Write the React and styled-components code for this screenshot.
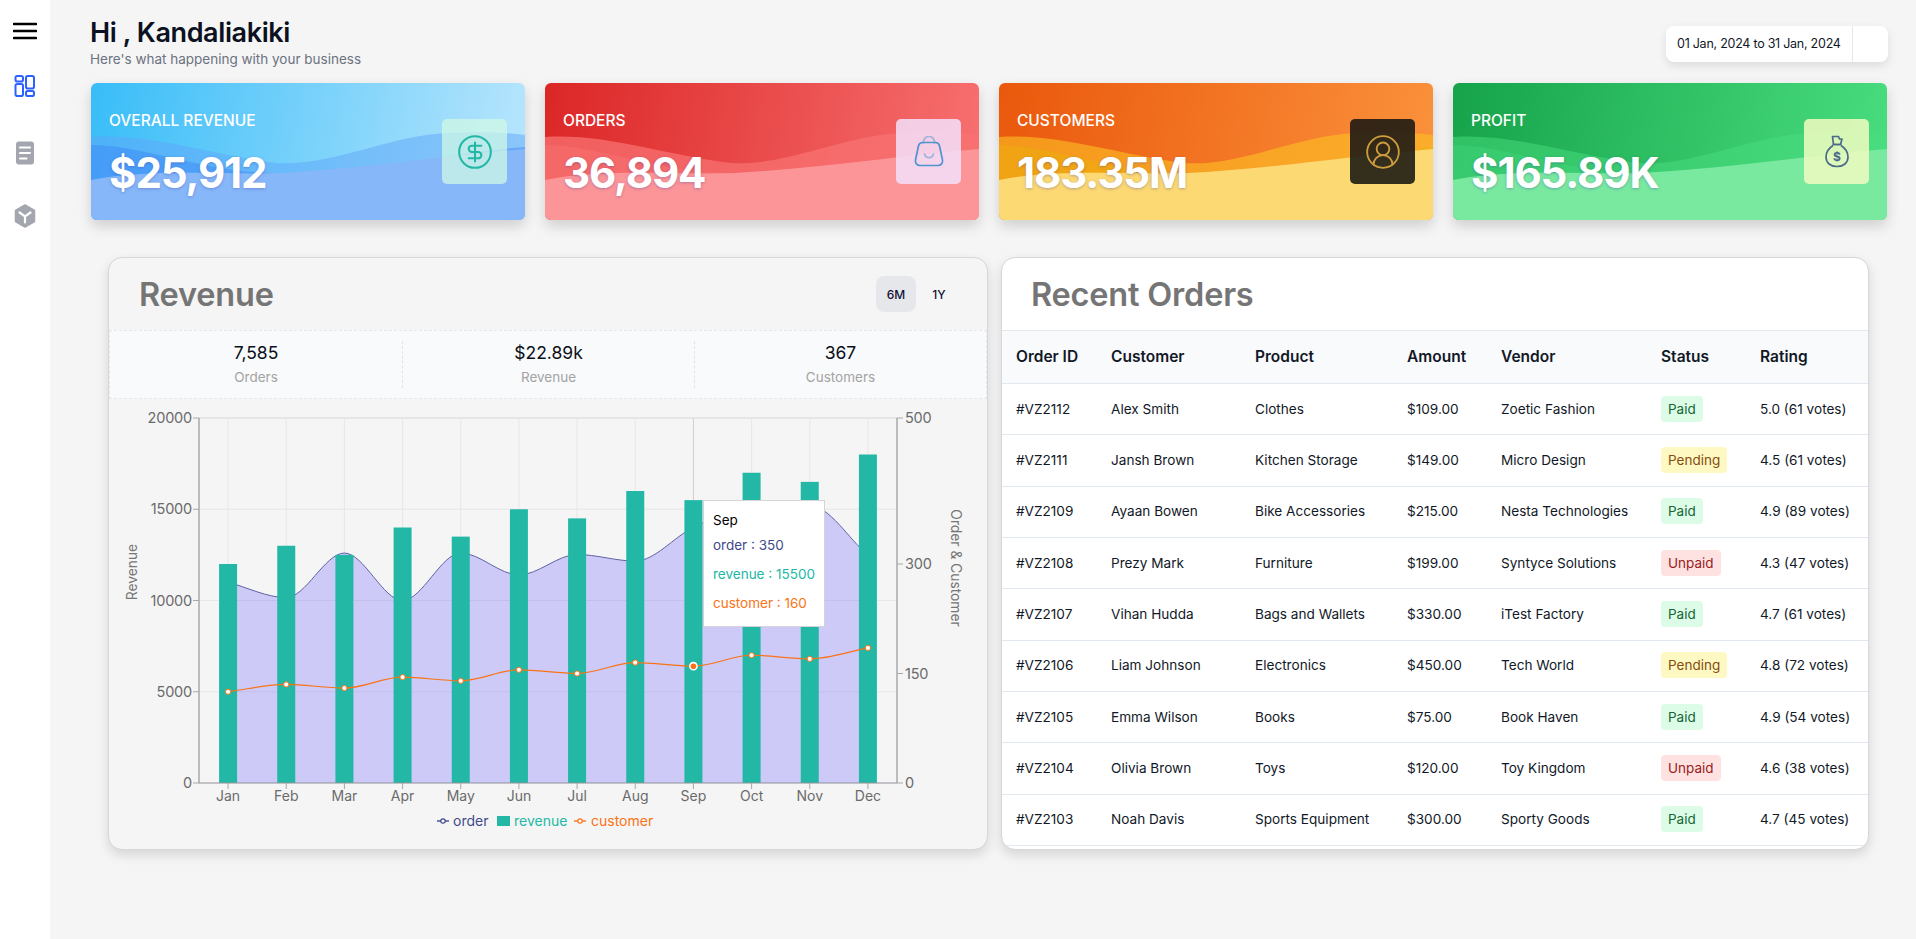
import React from 'react';
import styled, { createGlobalStyle } from 'styled-components';
import { CircleDollarSign, CircleUserRound } from 'lucide-react';

const GlobalStyle = createGlobalStyle`
  * { box-sizing: border-box; }
  body {
    margin: 0;
    background: #f5f5f5;
    font-family: Inter, "Noto Sans", sans-serif;
    color: #0f172a;
  }
`;

const STAT_CARDS = [
  {
    label: 'OVERALL REVENUE', value: '$25,912', from: '#38bdf8', to: '#bae6fd',
    back: 'rgba(96,165,250,.5)', band: 'rgba(59,130,246,.45)', front: '#86b7f9',
    box: 'rgba(209,250,229,.72)', tint: '#22b8a5', icon: 'dollar',
  },
  {
    label: 'ORDERS', value: '36,894', from: '#dc2626', to: '#f87171',
    back: 'rgba(248,113,113,.75)', band: 'rgba(248,113,113,.5)', front: '#fc9598',
    box: 'rgba(243,225,250,.85)', tint: '#4f93cf', icon: 'bag',
  },
  {
    label: 'CUSTOMERS', value: '183.35M', from: '#ea580c', to: '#fb923c',
    back: 'rgba(251,191,36,.62)', band: 'rgba(234,179,8,.4)', front: '#fcd972',
    box: 'rgba(30,27,20,.9)', tint: '#cf9c3e', icon: 'user',
  },
  {
    label: 'PROFIT', value: '$165.89K', from: '#16a34a', to: '#4ade80',
    back: 'rgba(74,222,128,.5)', band: 'rgba(74,222,128,.3)', front: '#79e9a0',
    box: 'rgba(236,250,190,.88)', tint: '#4b6a8a', icon: 'sack',
  },
];

const ORDERS = [
  ['#VZ2112', 'Alex Smith', 'Clothes', '$109.00', 'Zoetic Fashion', 'Paid', '5.0 (61 votes)'],
  ['#VZ2111', 'Jansh Brown', 'Kitchen Storage', '$149.00', 'Micro Design', 'Pending', '4.5 (61 votes)'],
  ['#VZ2109', 'Ayaan Bowen', 'Bike Accessories', '$215.00', 'Nesta Technologies', 'Paid', '4.9 (89 votes)'],
  ['#VZ2108', 'Prezy Mark', 'Furniture', '$199.00', 'Syntyce Solutions', 'Unpaid', '4.3 (47 votes)'],
  ['#VZ2107', 'Vihan Hudda', 'Bags and Wallets', '$330.00', 'iTest Factory', 'Paid', '4.7 (61 votes)'],
  ['#VZ2106', 'Liam Johnson', 'Electronics', '$450.00', 'Tech World', 'Pending', '4.8 (72 votes)'],
  ['#VZ2105', 'Emma Wilson', 'Books', '$75.00', 'Book Haven', 'Paid', '4.9 (54 votes)'],
  ['#VZ2104', 'Olivia Brown', 'Toys', '$120.00', 'Toy Kingdom', 'Unpaid', '4.6 (38 votes)'],
  ['#VZ2103', 'Noah Davis', 'Sports Equipment', '$300.00', 'Sporty Goods', 'Paid', '4.7 (45 votes)'],
];

const COLUMNS = [
  ['Order ID', 95], ['Customer', 144], ['Product', 152], ['Amount', 94],
  ['Vendor', 160], ['Status', 99], ['Rating', 124],
];

const MONTHS = ['Jan', 'Feb', 'Mar', 'Apr', 'May', 'Jun', 'Jul', 'Aug', 'Sep', 'Oct', 'Nov', 'Dec'];
const REVENUE = [12000, 13000, 12500, 14000, 13500, 15000, 14500, 16000, 15500, 17000, 16500, 18000];
const ORDER = [275, 254, 315, 250, 315, 285, 313, 304, 350, 380, 380, 312];
const CUSTOMER = [125, 135, 130, 145, 140, 155, 150, 165, 160, 175, 170, 185];

const PLOT = { left: 90, right: 788, top: 19, bottom: 384 };
const BAND = (PLOT.right - PLOT.left) / 12;
const HEIGHT = PLOT.bottom - PLOT.top;
const xAt = (i) => PLOT.left + BAND * (i + 0.5);
const yLeft = (v) => PLOT.bottom - (v / 20000) * HEIGHT;
const yRight = (v) => PLOT.bottom - (v / 500) * HEIGHT;

// monotone cubic through the points, same look as the chart lib's smooth curve
const smoothPath = (pts) => {
  const n = pts.length;
  const slopes = [];
  for (let i = 0; i < n - 1; i++) {
    slopes.push((pts[i + 1][1] - pts[i][1]) / (pts[i + 1][0] - pts[i][0]));
  }
  const tangents = pts.map((_, i) => {
    if (i === 0) return slopes[0];
    if (i === n - 1) return slopes[n - 2];
    if (slopes[i - 1] * slopes[i] <= 0) return 0;
    return (slopes[i - 1] + slopes[i]) / 2;
  });
  let d = `M${pts[0][0]},${pts[0][1]}`;
  for (let i = 0; i < n - 1; i++) {
    const h = (pts[i + 1][0] - pts[i][0]) / 3;
    d += ` C${pts[i][0] + h},${pts[i][1] + tangents[i] * h} ${pts[i + 1][0] - h},${pts[i + 1][1] - tangents[i + 1] * h} ${pts[i + 1][0]},${pts[i + 1][1]}`;
  }
  return d;
};

const orderLine = smoothPath(ORDER.map((v, i) => [xAt(i), yRight(v)]));
const customerLine = smoothPath(CUSTOMER.map((v, i) => [xAt(i), yRight(v)]));
const orderArea = `${orderLine} L${xAt(11)},${PLOT.bottom} L${xAt(0)},${PLOT.bottom} Z`;

const Shell = styled.div`
  display: flex;
  min-height: 100vh;
  background: #f5f5f5;
`;

const Sidebar = styled.aside`
  width: 50px;
  flex: none;
  background: #fff;
  display: flex;
  flex-direction: column;
  align-items: center;
  padding-top: 22px;
`;

const NavIcon = styled.div`
  display: flex;
  margin-bottom: ${(p) => p.$gap}px;
  color: ${(p) => p.$color};
`;

const Main = styled.main`
  flex: 1;
  min-width: 0;
  padding: 16px 29px 0 41px;
`;

const TopBar = styled.header`
  display: flex;
  justify-content: space-between;
  align-items: flex-start;
  margin-bottom: 15px;
  margin-left: -1px;
`;

const Greeting = styled.h1`
  margin: 0;
  font-size: 27px;
  line-height: 34px;
  font-weight: 600;
  letter-spacing: -0.4px;
  color: #0b1120;
`;

const SubGreeting = styled.p`
  margin: 0;
  font-size: 13.5px;
  line-height: 18px;
  color: #6b7280;
`;

const DateRange = styled.div`
  margin: 10px -1px 0 0;
  width: 222px;
  height: 36px;
  display: flex;
  background: #fff;
  border-radius: 8px;
  box-shadow: 0 4px 10px rgba(0, 0, 0, 0.1);
`;

const DateText = styled.span`
  width: 187px;
  padding-left: 11px;
  border-right: 1px solid #e5e7eb;
  font-size: 12.5px;
  letter-spacing: -0.25px;
  line-height: 36px;
  white-space: nowrap;
  color: #111827;
`;

const StatGrid = styled.section`
  display: grid;
  grid-template-columns: repeat(4, 1fr);
  gap: 20px;
`;

const StatCard = styled.article`
  position: relative;
  height: 137px;
  overflow: hidden;
  border-radius: 6px;
  padding: 27px 18px;
  color: #fff;
  background: linear-gradient(100deg, ${(p) => p.$from}, ${(p) => p.$to});
`;

const StatShadow = styled.div`
  border-radius: 6px;
  box-shadow: 0 6px 14px rgba(0, 0, 0, 0.16);
`;

const Waves = styled.svg`
  position: absolute;
  inset: 0;
  width: 100%;
  height: 100%;
`;

const StatLabel = styled.div`
  position: relative;
  font-size: 15.5px;
  line-height: 22px;
  font-weight: 500;
`;

const StatValue = styled.div`
  position: relative;
  margin-top: 15px;
  font-size: 42px;
  line-height: 52px;
  font-weight: 700;
  letter-spacing: -1.1px;
  text-shadow: 0 1px 3px rgba(60, 60, 160, 0.35);
`;

const StatIconBox = styled.div`
  position: absolute;
  top: 36px;
  right: 18px;
  width: 65px;
  height: 65px;
  border-radius: 5px;
  display: flex;
  align-items: center;
  justify-content: center;
  background: ${(p) => p.$bg};
  color: ${(p) => p.$tint};
`;

const PanelGrid = styled.section`
  display: grid;
  grid-template-columns: 880fr 868fr;
  gap: 13px;
  margin: 37px 18px 0 17px;
`;

const Panel = styled.div`
  height: 593px;
  overflow: hidden;
  border: 1px solid #d6d6db;
  border-radius: 14px;
  background: ${(p) => p.$bg};
  box-shadow: 0 5px 12px rgba(0, 0, 0, 0.13);
`;

const PanelHead = styled.div`
  height: 72px;
  display: flex;
  align-items: center;
  justify-content: space-between;
  padding: 0 25px 0 ${(p) => p.$pad}px;
`;

const PanelTitle = styled.h2`
  margin: 0;
  font-size: 32.5px;
  font-weight: 600;
  letter-spacing: -0.2px;
  color: #757575;
`;

const RangeTabs = styled.div`
  display: flex;
`;

const RangeTab = styled.button`
  width: ${(p) => p.$width}px;
  height: 36px;
  border: 0;
  border-radius: 8px;
  padding: 0;
  font: 500 12px Inter, sans-serif;
  color: #111133;
  background: ${(p) => (p.$active ? '#e5e7eb' : 'transparent')};
`;

const StatsRow = styled.div`
  height: 69px;
  display: grid;
  grid-template-columns: repeat(3, 1fr);
  align-items: center;
  background: #f9fafb;
  border: 1px dashed #e5e7eb;
`;

const StatsCell = styled.div`
  height: 47px;
  display: flex;
  flex-direction: column;
  align-items: center;
  justify-content: center;
  border-left: ${(p) => (p.$first ? '0' : '1px dashed #e1e3e8')};
`;

const StatsNumber = styled.div`
  font-size: 17.5px;
  line-height: 24px;
  color: #0b0f19;
`;

const StatsName = styled.div`
  font-size: 13.5px;
  line-height: 24px;
  color: #a3a3a3;
`;

const ChartBox = styled.div`
  position: relative;
  height: 450px;
`;

const ChartSvg = styled.svg`
  display: block;
  font-family: Inter, sans-serif;
`;

const Tooltip = styled.div`
  position: absolute;
  left: 594px;
  top: 101px;
  width: 122px;
  height: 127px;
  padding: 8px 9px 0;
  background: #fff;
  border: 1px solid #d4d4d4;
  font-size: 13.5px;
`;

const TooltipLine = styled.div`
  height: ${(p) => p.$height}px;
  line-height: 22px;
  white-space: nowrap;
  color: ${(p) => p.$color};
`;

const OrdersTable = styled.table`
  width: 100%;
  table-layout: fixed;
  border-collapse: collapse;
  border-top: 1px solid #e5e7eb;
`;

const HeadCell = styled.th`
  width: ${(p) => p.$width}px;
  height: 53px;
  padding: 0 0 2px 14px;
  text-align: left;
  font-size: 15.5px;
  font-weight: 600;
  color: #111827;
  background: #f9fafb;
  border-bottom: 1px solid #e2e8f0;
`;

const BodyRow = styled.tr`
  height: 51.33px;
`;

const BodyCell = styled.td`
  padding: 0 0 1px 14px;
  font-size: 13.6px;
  white-space: nowrap;
  color: #111827;
  border-bottom: 1px solid #e2e8f0;
`;

const BADGE_COLORS = {
  Paid: ['#dcfce7', '#166534'],
  Pending: ['#fef9c3', '#854d0e'],
  Unpaid: ['#fee2e2', '#991b1b'],
};

const Badge = styled.span`
  display: inline-block;
  height: 26px;
  padding: 0 7px;
  border-radius: 4px;
  font-size: 13.5px;
  line-height: 26px;
  background: ${(p) => BADGE_COLORS[p.$status][0]};
  color: ${(p) => BADGE_COLORS[p.$status][1]};
`;

const MenuIcon = () => (
  <svg width="24" height="18" viewBox="0 0 24 18" fill="none" stroke="#000" strokeWidth="2.6" strokeLinecap="round">
    <path d="M1 2h22M1 9h22M1 16h22" />
  </svg>
);

const DashboardIcon = () => (
  <svg width="22" height="22" viewBox="0 0 22 22" fill="none" stroke="currentColor" strokeWidth="2">
    <rect x="1.500" y="1" width="7.500" height="5.500" rx="1.800" />
    <rect x="1.500" y="9" width="7.500" height="12" rx="1.800" />
    <rect x="12" y="1" width="8" height="12.500" rx="1.800" />
    <rect x="12" y="16" width="8" height="5" rx="1.800" />
  </svg>
);

const DocIcon = () => (
  <svg width="20" height="24" viewBox="0 0 20 24">
    <rect x="1" y="0.500" width="18" height="23" rx="3" fill="currentColor" />
    <path d="M5 6.500h10M5 12h10M5 17.500h6.500" stroke="#fff" strokeWidth="2" strokeLinecap="round" />
  </svg>
);

const CubeIcon = () => (
  <svg width="22" height="24" viewBox="0 0 22 24">
    <path d="M11 1 20.500 6.500v11L11 23 1.500 17.500v-11z" fill="currentColor" stroke="currentColor" strokeWidth="1.500" strokeLinejoin="round" />
    <path d="M5.500 8.500 11 12.500 16.500 8.500M11 12.500V18.500" stroke="#fff" strokeWidth="2.200" fill="none" strokeLinecap="round" />
  </svg>
);

const BagIcon = () => (
  <svg width="30" height="31" viewBox="0 0 30 31" fill="none" stroke="currentColor" strokeWidth="1.700" strokeLinecap="round">
    <path d="M9.500 7V6a5.500 5.500 0 0 1 11 0v1" opacity=".5" />
    <path d="M8.500 6.500h13c2 0 3.500 1.300 4 3.300l3 14.200c.6 3-1.500 5.500-4.500 5.500H6c-3 0-5.100-2.500-4.500-5.500l3-14.200c.5-2 2-3.300 4-3.300z" />
    <path d="M10.500 18c.6 2.500 2.400 3.700 4.500 3.700s3.900-1.200 4.500-3.700" opacity=".5" />
  </svg>
);

const SackIcon = () => (
  <svg width="24" height="33" viewBox="0 0 24 33" fill="none" stroke="currentColor" strokeWidth="1.700" strokeLinejoin="round">
    <path d="M7.500 1.500h6l1 2.500h2.500L15.500 9.500h-7z" />
    <path d="M7.500 9.500h9" />
    <path d="M8 10.500C4 13 1 17 1 22c0 6 4.500 9.500 11 9.500S23 28 23 22c0-5-3-9-7-11.500" />
    <text x="12" y="26" textAnchor="middle" fontSize="12" fontWeight="700" fill="currentColor" stroke="none" fontFamily="Inter, sans-serif">$</text>
  </svg>
);

const CARD_ICONS = {
  dollar: <CircleDollarSign size={38} strokeWidth={1.3} />,
  bag: <BagIcon />,
  user: <CircleUserRound size={38} strokeWidth={1.15} />,
  sack: <SackIcon />,
};

const CardWaves = ({ back, band, front }) => (
  <Waves viewBox="0 0 435 137" preserveAspectRatio="none">
    <path d="M0,54 C60,50 120,72 186,80 C240,84 300,52 358,50 C390,48 420,50 435,52 L435,137 L0,137 Z" fill={back} />
    <path d="M0,62 C50,62 110,88 180,90 C240,90 300,82 338,78 C370,70 410,66 435,64 L435,137 L0,137 Z" fill={band} />
    <path d="M0,97 C60,85 130,92 190,90 C280,85 360,72 435,66 L435,137 L0,137 Z" fill={front} />
  </Waves>
);

const RevenueChart = () => (
  <ChartSvg width="878" height="450">
    {[20000, 15000, 10000, 5000].map((v) => (
      <line key={v} x1={PLOT.left} x2={PLOT.right} y1={yLeft(v)} y2={yLeft(v)} stroke="#e6e6e6" strokeWidth={v === 20000 ? 2 : 1} />
    ))}
    {MONTHS.map((m, i) => (
      <line key={m} x1={xAt(i)} x2={xAt(i)} y1={PLOT.top} y2={PLOT.bottom} stroke={m === 'Sep' ? '#cfcfcf' : '#e6e6e6'} />
    ))}

    <path d={orderArea} fill="rgba(99,91,255,.28)" />
    <path d={orderLine} fill="none" stroke="#5f63a3" strokeWidth="1" />

    {REVENUE.map((v, i) => (
      <rect key={MONTHS[i]} x={xAt(i) - 9} y={yLeft(v)} width="18" height={PLOT.bottom - yLeft(v)} fill="#22b8a5" />
    ))}

    <path d={customerLine} fill="none" stroke="#f97316" strokeWidth="1.2" />
    {CUSTOMER.map((v, i) => (
      MONTHS[i] === 'Sep'
        ? <circle key={MONTHS[i]} cx={xAt(i)} cy={yRight(v)} r="3.6" fill="#f97316" stroke="#fff" strokeWidth="1.6" />
        : <circle key={MONTHS[i]} cx={xAt(i)} cy={yRight(v)} r="2.6" fill="#fff" stroke="#f97316" strokeWidth="1" />
    ))}

    <line x1={PLOT.left} x2={PLOT.left} y1={PLOT.top} y2={PLOT.bottom} stroke="#a8a8a8" strokeWidth="1.5" />
    <line x1={PLOT.right} x2={PLOT.right} y1={PLOT.top} y2={PLOT.bottom} stroke="#a8a8a8" strokeWidth="1.5" />
    <line x1={PLOT.left} x2={PLOT.right} y1={PLOT.bottom} y2={PLOT.bottom} stroke="#8f8f9a" strokeWidth="1.2" />

    {[20000, 15000, 10000, 5000, 0].map((v) => (
      <g key={v}>
        <line x1={PLOT.left - 6} x2={PLOT.left} y1={yLeft(v)} y2={yLeft(v)} stroke="#a8a8a8" />
        <text x={PLOT.left - 7} y={yLeft(v) + 5} textAnchor="end" fontSize="14.5" letterSpacing="-0.2" fill="#6b6b6b">{v}</text>
      </g>
    ))}
    {[500, 300, 150, 0].map((v) => (
      <g key={v}>
        <line x1={PLOT.right} x2={PLOT.right + 6} y1={yRight(v)} y2={yRight(v)} stroke="#a8a8a8" />
        <text x={PLOT.right + 8} y={yRight(v) + 5} fontSize="14.5" letterSpacing="-0.2" fill="#6b6b6b">{v}</text>
      </g>
    ))}
    {MONTHS.map((m, i) => (
      <g key={m}>
        <line x1={xAt(i)} x2={xAt(i)} y1={PLOT.bottom} y2={PLOT.bottom + 6} stroke="#a8a8a8" />
        <text x={xAt(i)} y={PLOT.bottom + 18} textAnchor="middle" fontSize="14" fill="#6b6b6b">{m}</text>
      </g>
    ))}

    <text transform="translate(28,173) rotate(-90)" textAnchor="middle" fontSize="13.800" fill="#757575">Revenue</text>
    <text transform="translate(842,169) rotate(90)" textAnchor="middle" fontSize="13.800" fill="#757575">Order &amp; Customer</text>

    <g fontSize="14">
      <line x1="328" x2="340" y1="422" y2="422" stroke="#3f4a8a" strokeWidth="1.4" />
      <circle cx="334" cy="422" r="2.200" fill="#fff" stroke="#3f4a8a" strokeWidth="1.2" />
      <text x="344" y="427" fill="#3f4a8a">order</text>
      <rect x="388" y="417" width="13" height="10" fill="#22b8a5" />
      <text x="405" y="427" fill="#22b8a5">revenue</text>
      <line x1="465" x2="477" y1="422" y2="422" stroke="#f97316" strokeWidth="1.4" />
      <circle cx="471" cy="422" r="2.200" fill="#fff" stroke="#f97316" strokeWidth="1.2" />
      <text x="482" y="427" fill="#f97316">customer</text>
    </g>
  </ChartSvg>
);

export default function App() {
  return (
    <Shell>
      <GlobalStyle />
      <Sidebar>
        <NavIcon $gap={35} $color="#000"><MenuIcon /></NavIcon>
        <NavIcon $gap={44} $color="#2d62ff"><DashboardIcon /></NavIcon>
        <NavIcon $gap={39} $color="#a3a6ae"><DocIcon /></NavIcon>
        <NavIcon $gap={0} $color="#a3a6ae"><CubeIcon /></NavIcon>
      </Sidebar>
      <Main>
        <TopBar>
          <div>
            <Greeting>Hi , Kandaliakiki</Greeting>
            <SubGreeting>Here's what happening with your business</SubGreeting>
          </div>
          <DateRange>
            <DateText>01 Jan, 2024 to 31 Jan, 2024</DateText>
          </DateRange>
        </TopBar>

        <StatGrid>
          {STAT_CARDS.map((c) => (
            <StatShadow key={c.label}>
              <StatCard $from={c.from} $to={c.to}>
                <CardWaves back={c.back} band={c.band} front={c.front} />
                <StatLabel>{c.label}</StatLabel>
                <StatValue>{c.value}</StatValue>
                <StatIconBox $bg={c.box} $tint={c.tint}>{CARD_ICONS[c.icon]}</StatIconBox>
              </StatCard>
            </StatShadow>
          ))}
        </StatGrid>

        <PanelGrid>
          <Panel $bg="#f5f5f5">
            <PanelHead $pad={30}>
              <PanelTitle>Revenue</PanelTitle>
              <RangeTabs>
                <RangeTab $active $width={40}>6M</RangeTab>
                <RangeTab $width={46}>1Y</RangeTab>
              </RangeTabs>
            </PanelHead>
            <StatsRow>
              <StatsCell $first><StatsNumber>7,585</StatsNumber><StatsName>Orders</StatsName></StatsCell>
              <StatsCell><StatsNumber>$22.89k</StatsNumber><StatsName>Revenue</StatsName></StatsCell>
              <StatsCell><StatsNumber>367</StatsNumber><StatsName>Customers</StatsName></StatsCell>
            </StatsRow>
            <ChartBox>
              <RevenueChart />
              <Tooltip>
                <TooltipLine $color="#000" $height={25}>Sep</TooltipLine>
                <TooltipLine $color="#3f4a8a" $height={29}>order : 350</TooltipLine>
                <TooltipLine $color="#22b8a5" $height={29}>revenue : 15500</TooltipLine>
                <TooltipLine $color="#f97316" $height={29}>customer : 160</TooltipLine>
              </Tooltip>
            </ChartBox>
          </Panel>

          <Panel $bg="#fff">
            <PanelHead $pad={29}>
              <PanelTitle>Recent Orders</PanelTitle>
            </PanelHead>
            <OrdersTable>
              <thead>
                <tr>
                  {COLUMNS.map(([name, width]) => (
                    <HeadCell key={name} $width={width}>{name}</HeadCell>
                  ))}
                </tr>
              </thead>
              <tbody>
                {ORDERS.map((row) => (
                  <BodyRow key={row[0]}>
                    {row.map((cell, i) => (
                      <BodyCell key={i}>
                        {i === 5 ? <Badge $status={cell}>{cell}</Badge> : cell}
                      </BodyCell>
                    ))}
                  </BodyRow>
                ))}
              </tbody>
            </OrdersTable>
          </Panel>
        </PanelGrid>
      </Main>
    </Shell>
  );
}
